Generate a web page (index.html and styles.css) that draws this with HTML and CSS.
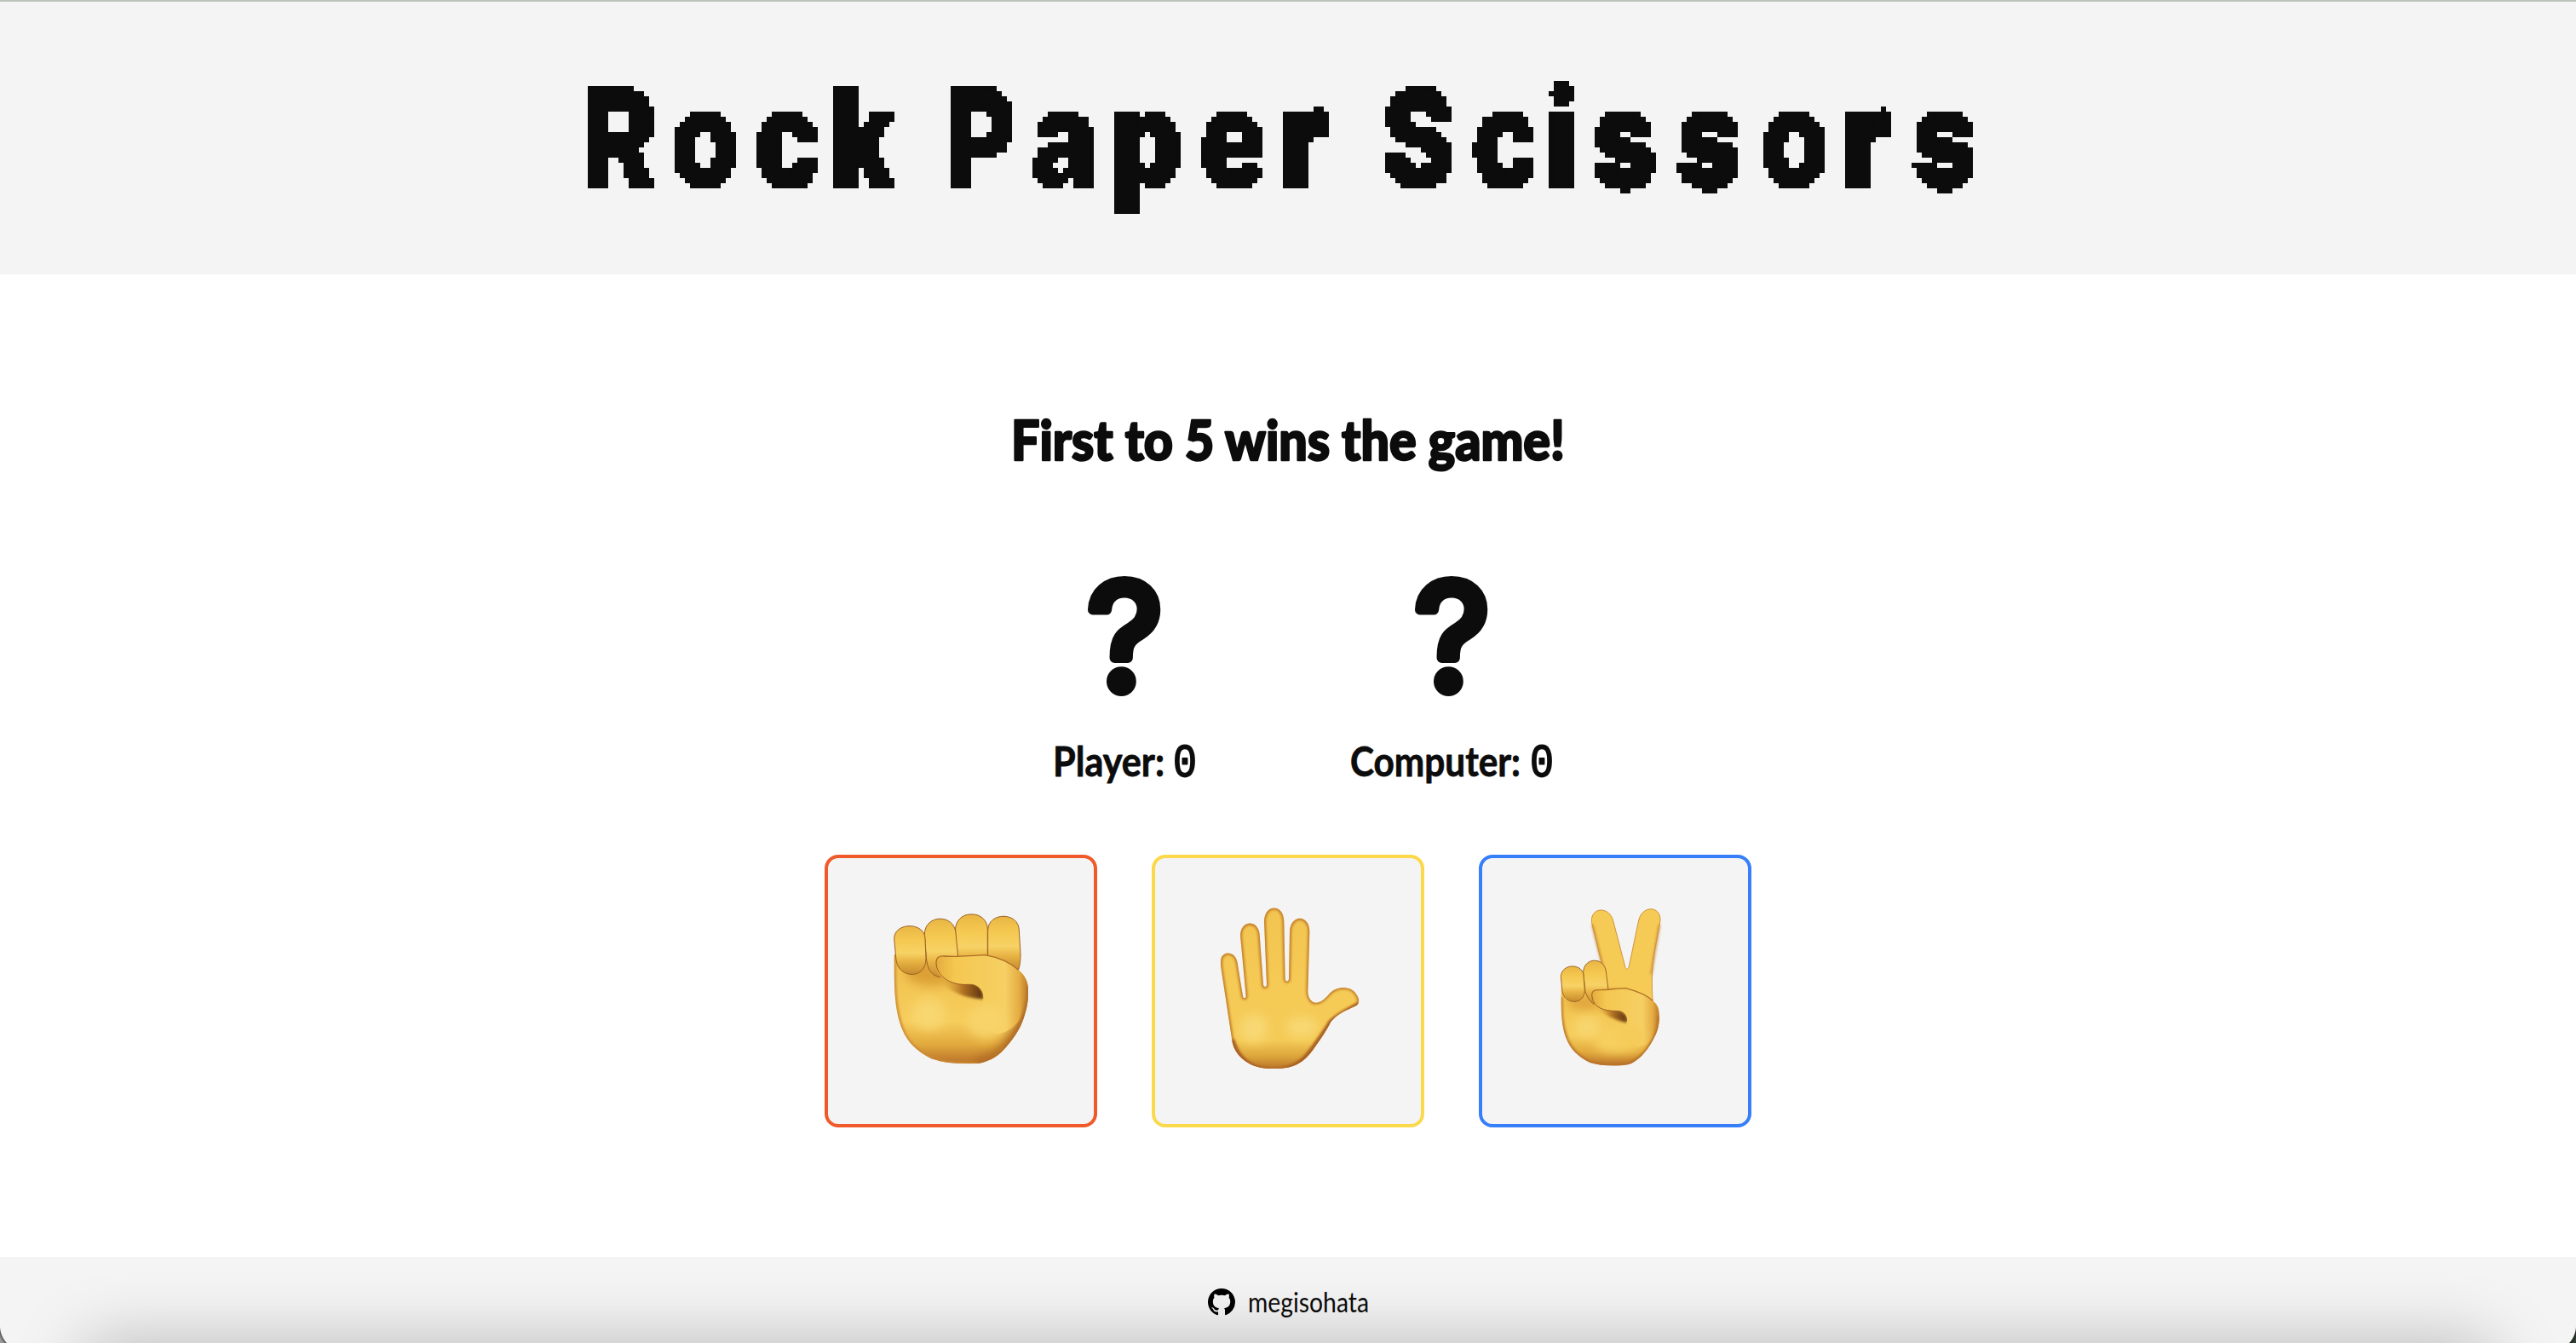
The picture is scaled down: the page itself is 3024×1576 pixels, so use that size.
FILE: index.html
```html
<!DOCTYPE html>
<html lang="en">
<head>
<meta charset="utf-8">
<title>Rock Paper Scissors</title>
<link rel="stylesheet" href="styles.css">
</head>
<body>
<header class="header">
  <h1 class="title">
    <svg class="title-art" width="1680" height="186" viewBox="0 0 1680 186">
      <defs>
        <filter id="pixel" filterUnits="userSpaceOnUse" x="0" y="0" width="1680" height="180" color-interpolation-filters="sRGB">
          <feFlood x="2" y="2" width="1" height="1" flood-color="#000"/>
          <feOffset x="0" y="0" width="6" height="6" dx="0" dy="0"/>
          <feTile x="0" y="0" width="1680" height="180" result="grid"/>
          <feComposite in="SourceGraphic" in2="grid" operator="in"/>
          <feComponentTransfer><feFuncA type="discrete" tableValues="0 1"/></feComponentTransfer>
          <feMorphology operator="dilate" radius="2" result="a"/>
          <feOffset dx="1" dy="0" result="b"/>
          <feMerge result="c"><feMergeNode in="a"/><feMergeNode in="b"/></feMerge>
          <feOffset dx="0" dy="1" result="d"/>
          <feMerge><feMergeNode in="c"/><feMergeNode in="d"/></feMerge>
        </filter>
      </defs>
      <g filter="url(#pixel)">
        <text class="title-text" transform="scale(.8 1)" y="149" x="15 143 266 376 480 545 673 790 919 1037 1130 1187 1318 1428 1496 1619 1742 1863 1965">Rock Pape<tspan class="wide">r</tspan> Sci<tspan class="curved">ss</tspan>o<tspan class="wide">r</tspan><tspan class="curved">s</tspan></text>
      </g>
    </svg>
  </h1>
</header>

<main class="main">
  <h2 class="message">
    <svg width="646" height="80" viewBox="0 0 646 80"><text class="message-text" x="-2" y="60" textLength="650" lengthAdjust="spacingAndGlyphs">First to 5 wins the game!</text></svg>
  </h2>
  <section class="scoreboard">
    <div class="score">
      <svg width="80" height="144" viewBox="0 0 80 144"><text class="sign" x="-4" y="136" textLength="89" lengthAdjust="spacingAndGlyphs">?</text></svg>
      <div class="score-line">
        <svg width="127" height="56" viewBox="0 0 127 56"><text class="score-text" x="-3" y="42" textLength="131" lengthAdjust="spacingAndGlyphs">Player:</text></svg>
        <svg width="23" height="56" viewBox="0 0 23 56"><text class="zero" x="-2" y="42" textLength="28" lengthAdjust="spacingAndGlyphs">0</text></svg>
      </div>
    </div>
    <div class="score">
      <svg width="80" height="144" viewBox="0 0 80 144"><text class="sign" x="-4" y="136" textLength="89" lengthAdjust="spacingAndGlyphs">?</text></svg>
      <div class="score-line">
        <svg width="198" height="56" viewBox="0 0 198 56"><text class="score-text" x="-2" y="42" textLength="200" lengthAdjust="spacingAndGlyphs">Computer:</text></svg>
        <svg width="23" height="56" viewBox="0 0 23 56"><text class="zero" x="-2" y="42" textLength="28" lengthAdjust="spacingAndGlyphs">0</text></svg>
      </div>
    </div>
  </section>

  <section class="choices">
    <button class="choice rock" aria-label="Rock">
      <svg viewBox="66 51 936 936">
        <defs>
          <linearGradient id="skin" x1="0" y1="0" x2="0" y2="1">
            <stop offset="0" stop-color="#f0bf4b"/><stop offset=".62" stop-color="#f6cd5c"/><stop offset=".82" stop-color="#e2aa3d"/><stop offset="1" stop-color="#b56c28"/>
          </linearGradient>
          <linearGradient id="finger" x1="0" y1="0" x2="0" y2="1">
            <stop offset="0" stop-color="#e9b644"/><stop offset=".3" stop-color="#f5c951"/><stop offset=".56" stop-color="#f7d265"/><stop offset=".72" stop-color="#e9b545"/><stop offset="1" stop-color="#c68a2e"/>
          </linearGradient>
          <linearGradient id="fold" x1="0" y1="0" x2="1" y2="0">
            <stop offset="0" stop-color="#d99a30" stop-opacity="0"/><stop offset=".5" stop-color="#b37423"/><stop offset="1" stop-color="#5b310e"/>
          </linearGradient>
          <linearGradient id="thumb" x1="0" y1="0" x2="1" y2="0">
            <stop offset="0" stop-color="#e5ac3e"/><stop offset=".2" stop-color="#f4c750"/><stop offset=".75" stop-color="#f6d064"/><stop offset=".9" stop-color="#e5ad42"/><stop offset="1" stop-color="#bd792c"/>
          </linearGradient>
          <linearGradient id="palm" x1="0" y1="0" x2="0" y2="1">
            <stop offset="0" stop-color="#f2c450"/><stop offset=".5" stop-color="#f5ca55"/><stop offset=".82" stop-color="#f5cb57"/><stop offset=".92" stop-color="#dca53b"/><stop offset="1" stop-color="#b97129"/>
          </linearGradient>
          <filter id="soft" x="-40%" y="-40%" width="180%" height="180%"><feGaussianBlur stdDeviation="18"/></filter>
          <filter id="soft-line" x="-20%" y="-20%" width="140%" height="140%"><feGaussianBlur stdDeviation="5"/></filter>
          <clipPath id="fist-clip"><path d="M299 390C298 520 302 590 328 655C345 700 385 735 430 757C490 778 560 775 600 773C640 765 672 743 690 720C715 690 740 660 755 615C770 570 771 550 771 515C771 485 757 461 737 445L640 380Z"/></clipPath>
          <clipPath id="palm-clip"><path id="palm-shape" d="M279 430V415C279 375 332 375 338 420L357 536C358 546 368 546 368 536L348 325C348 267 412 267 416 320L429 496C430 507 441 507 441 496L432 275C432 210 502 210 502 275L506 476C507 487 518 487 519 476L522 310C524 248 592 248 592 310L586 520C586 540 597 560 613 560C630 560 645 548 660 530C690 496 738 504 752 524C770 545 768 562 758 569C715 589 687 602 667 627C650 661 630 690 604 726C580 761 550 781 515 788C485 793 445 793 417 788C370 778 330 745 320 700Z"/></clipPath>
          <clipPath id="peace-clip"><path d="M338 500C336 600 341 645 355 683C370 725 400 751 440 771C480 784 540 784 575 777C605 768 633 737 650 710C675 670 684 648 683 605C682 580 675 565 660 553L560 505Z"/></clipPath>
        </defs>
        <g clip-path="url(#fist-clip)">
          <path fill="url(#skin)" d="M290 375H780V780H290Z"/>
          <ellipse cx="430" cy="455" rx="90" ry="45" fill="#dba036" filter="url(#soft)"/>
          <ellipse cx="420" cy="600" rx="62" ry="55" fill="#f8d66f" filter="url(#soft)"/>
          <path d="M299 390C298 520 302 590 328 655C345 700 385 735 430 757C490 778 560 775 600 773" fill="none" stroke="#cc8930" stroke-width="12" filter="url(#soft-line)"/>
          <path d="M585 777C640 770 680 737 705 700C750 640 773 590 775 500" fill="none" stroke="#b06a24" stroke-width="38" filter="url(#soft)"/>
        </g>
        <g stroke="#9c6022" stroke-width="3" fill="url(#finger)">
          <path d="M629 306C629 239 739 239 739 306L744 390C744 420 740 435 736 446L629 400Z"/>
          <rect x="515" y="249" width="113" height="205" rx="52"/>
          <path d="M406 320C406 247 512 247 516 315L526 420L460 470C425 465 414 430 412 400Z"/>
          <path d="M299 335C299 275 408 275 408 335L411 405C411 480 315 476 306 410Z"/>
        </g>
        <path d="M465 480L560 487C595 490 617 516 611 548C585 546 530 540 480 505Z" fill="url(#fold)" filter="url(#soft-line)"/>
        <path d="M447 420C447 400 458 394 475 396C515 400 550 395 620 392C670 401 710 421 737 445C760 465 771 485 771 515C770 600 725 660 665 670C620 670 600 590 613 550C613 513 590 493 560 496C500 498 455 475 449 447Z" fill="url(#thumb)"/>
        <g clip-path="url(#fist-clip)">
          <ellipse cx="622" cy="625" rx="66" ry="60" fill="#f7d369" filter="url(#soft)"/>
          <path d="M775 500C773 600 735 665 690 720" fill="none" stroke="#b3702a" stroke-width="16" filter="url(#soft-line)"/>
        </g>
        <path d="M447 420C447 400 458 394 475 396C515 400 550 395 620 392C670 401 710 421 737 445" fill="none" stroke="#ae6d28" stroke-width="4"/>
        <path d="M447 420C449 470 500 500 560 496C595 493 614 520 611 545" fill="none" stroke="#9a5d22" stroke-width="3"/>
      </svg>
    </button>
    <button class="choice paper" aria-label="Paper">
      <svg viewBox="48 51 936 936">
        <g clip-path="url(#palm-clip)">
          <path fill="url(#palm)" d="M270 220H780V795H270Z"/>
          <ellipse cx="395" cy="650" rx="50" ry="50" fill="#f8d873" filter="url(#soft)"/>
          <ellipse cx="565" cy="645" rx="55" ry="36" fill="#f8d873" filter="url(#soft)"/>
          <use href="#palm-shape" fill="none" stroke="#bd7525" stroke-width="11" filter="url(#soft-line)"/>
          <path d="M320 690C340 750 375 797 465 799C560 797 585 748 667 627L765 565" fill="none" stroke="#a65d20" stroke-width="14" filter="url(#soft-line)"/>
        </g>
      </svg>
    </button>
    <button class="choice scissors" aria-label="Scissors">
      <svg viewBox="60 51 936 936">
        <path d="M483 430L446 280C437 222 510 217 522 275L563 432C566 445 573 445 577 432L611 270C625 212 696 220 686 278C670 370 650 430 661 560L500 535Z" fill="#f5cb56" stroke="#d09338" stroke-width="3"/>
        <path d="M448 285L484 430M684 285L655 460" fill="none" stroke="#c98530" stroke-width="6" filter="url(#soft-line)"/>
        <g clip-path="url(#peace-clip)">
          <path fill="url(#skin)" d="M330 490H690V787H330Z"/>
          <ellipse cx="420" cy="560" rx="60" ry="25" fill="#dfa53a" filter="url(#soft)"/>
          <ellipse cx="430" cy="645" rx="45" ry="35" fill="#f8d66f" filter="url(#soft)"/>
          <ellipse cx="525" cy="700" rx="70" ry="36" fill="#f7d061" filter="url(#soft)"/>
          <path d="M337 540C336 610 341 645 355 683C370 725 400 751 440 771C480 784 540 784 575 777C633 760 684 680 683 605" fill="none" stroke="#b87329" stroke-width="12" filter="url(#soft-line)"/>
        </g>
        <g fill="url(#finger)" stroke="#9f6424" stroke-width="3">
          <path d="M416 455C416 398 491 398 496 450L504 515L454 565C434 552 428 535 423 520Z"/>
          <path d="M337 470C337 420 415 420 417 465L421 515C421 570 350 568 342 520Z"/>
        </g>
        <path d="M465 574L530 584C560 590 574 606 569 631C545 625 505 612 475 590Z" fill="url(#fold)" filter="url(#soft-line)"/>
        <path d="M447 540C443 518 455 514 475 515C500 515 530 510 565 509C600 518 642 535 660 553C677 566 683 580 683 605C681 660 650 710 610 715C575 704 565 655 570 625C570 600 553 586 530 589C490 590 455 576 447 550Z" fill="url(#thumb)"/>
        <g clip-path="url(#peace-clip)">
          <ellipse cx="585" cy="685" rx="48" ry="42" fill="#f5cb58" filter="url(#soft)"/>
          <path d="M575 779C633 762 686 680 685 605" fill="none" stroke="#b87329" stroke-width="14" filter="url(#soft-line)"/>
        </g>
        <path d="M447 540C443 518 455 514 475 515C500 515 530 510 565 509C600 518 642 535 660 553" fill="none" stroke="#b27128" stroke-width="4"/>
        <path d="M447 540C452 577 490 590 530 589C557 588 570 604 569 625" fill="none" stroke="#9a5d22" stroke-width="3"/>
      </svg>
    </button>
  </section>
</main>

<footer class="footer">
  <a class="profile">
    <svg width="32" height="32" viewBox="0 0 16 16"><path d="M8 0C3.58 0 0 3.58 0 8c0 3.54 2.29 6.53 5.47 7.59.4.07.55-.17.55-.38 0-.19-.01-.82-.01-1.49-2.01.37-2.53-.49-2.69-.94-.09-.23-.48-.94-.82-1.13-.28-.15-.68-.52-.01-.53.63-.01 1.08.58 1.23.82.72 1.21 1.87.87 2.33.66.07-.52.28-.87.51-1.07-1.78-.2-3.64-.89-3.64-3.95 0-.87.31-1.59.82-2.15-.08-.2-.36-1.02.08-2.12 0 0 .67-.21 2.2.82.64-.18 1.32-.27 2-.27s1.36.09 2 .27c1.53-1.04 2.2-.82 2.2-.82.44 1.1.16 1.92.08 2.12.51.56.82 1.27.82 2.15 0 3.07-1.87 3.75-3.65 3.95.29.25.54.73.54 1.48 0 1.07-.01 1.93-.01 2.2 0 .21.15.46.55.38A8.01 8.01 0 0 0 16 8c0-4.42-3.58-8-8-8z"/></svg>
    <svg width="140" height="40" viewBox="0 0 140 40"><text class="profile-text" x="-2" y="28" textLength="142" lengthAdjust="spacingAndGlyphs">megisohata</text></svg>
  </a>
</footer>
</body>
</html>
```
FILE: styles.css
```css
* {
  box-sizing: border-box;
}

body {
  margin: 0;
  height: 1576px;
  display: flex;
  flex-direction: column;
  overflow: hidden;
  background: #fff;
  color: #0c0c0c;
  font-family: Lato, sans-serif;
}

svg {
  display: block;
  overflow: visible;
}

text {
  fill: #0c0c0c;
  stroke: #0c0c0c;
  stroke-linejoin: round;
}

.header {
  flex: none;
  height: 322px;
  padding-top: 71px;
  border-top: 2px solid #bcc4ba;
  background: #f4f4f4;
  display: flex;
  justify-content: center;
  align-items: flex-start;
}

.title,
.message {
  margin: 0;
}

.title {
  margin-top: -2px;
}

.title-text {
  font: 900 162px Inter, sans-serif;
  stroke-width: 2px;
}

.wide {
  stroke-width: 7px;
}

.curved {
  stroke-width: 4px;
}

.main {
  flex: 1;
  display: flex;
  flex-direction: column;
  align-items: center;
  padding-top: 158px;
}

.message-text {
  font-size: 65px;
  font-weight: 900;
  stroke-width: 2.5px;
}

.scoreboard {
  margin-top: 114px;
  display: grid;
  grid-template-columns: 320px 320px;
  column-gap: 64px;
}

.score {
  display: flex;
  flex-direction: column;
  align-items: center;
  gap: 51px;
}

.score-line {
  display: flex;
  gap: 13px;
}

.sign {
  font-family: Inter, sans-serif;
  font-size: 174px;
  font-weight: 400;
  stroke-width: 12px;
}

.score-text {
  font-size: 48px;
  font-weight: 700;
  stroke-width: .8px;
}

.zero {
  font-family: "Liberation Mono", monospace;
  font-size: 53px;
  stroke-width: 1.8px;
}

.choices {
  margin-top: 78px;
  display: flex;
  gap: 64px;
}

.choice {
  width: 320px;
  height: 320px;
  padding: 0;
  border: 4px solid;
  border-radius: 16px;
  background: #f4f4f4;
}

.choice svg {
  width: 312px;
  height: 312px;
}

.rock {
  border-color: #f05a2a;
}

.paper {
  border-color: #fbd94b;
}

.scissors {
  border-color: #367efa;
}

.footer {
  position: relative;
  flex: none;
  height: 101px;
  padding-top: 37px;
  display: flex;
  justify-content: center;
  overflow: hidden;
  background:
    radial-gradient(circle at 29px 0, transparent 28.5px, #555 29.5px, #999 32px) 0 100% / 8px 20px no-repeat,
    radial-gradient(circle at -21px 0, transparent 28.5px, #1c211d 29.5px, #2f3f33 32px) 100% 100% / 8px 20px no-repeat,
    #f4f4f4;
}

/* soft shade rising from the window's lower edge */
.footer::after {
  content: "";
  position: absolute;
  left: 100px;
  right: 100px;
  top: 100%;
  height: 120px;
  box-shadow: 0 0 80px rgba(0, 0, 0, .25);
}

.profile {
  display: flex;
  gap: 17px;
}

.profile-text {
  font-size: 32px;
  stroke: none;
}
```
